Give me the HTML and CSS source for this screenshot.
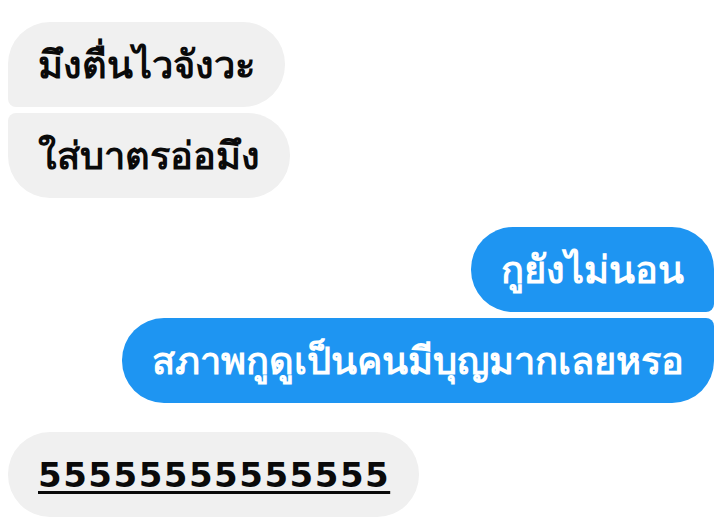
FILE: index.html
```html
<!DOCTYPE html>
<html lang="th">
<head>
<meta charset="utf-8">
<link rel="stylesheet" href="styles.css">
</head>
<body>
<div class="chat">
  <div class="group in">
    <div class="bubble first"><span class="t">มึงตื่นไวจังวะ</span></div>
    <div class="bubble last"><span class="t">ใส่บาตรอ่อมึง</span></div>
  </div>
  <div class="group out">
    <div class="bubble first"><span class="t">กูยังไม่นอน</span></div>
    <div class="bubble last"><span class="t">สภาพกูดูเป็นคนมีบุญมากเลยหรอ</span></div>
  </div>
  <div class="group in">
    <div class="bubble single numb"><span class="t num">55555555555555</span></div>
  </div>
</div>
</body>
</html>
```
FILE: styles.css
```css
html, body {
  margin: 0;
  padding: 0;
  background: #ffffff;
}
.chat {
  width: 720px;
  height: 530px;
  padding: 22px 6px 0 8px;
  box-sizing: border-box;
  display: flex;
  flex-direction: column;
  gap: 29px;
  font-family: "Liberation Sans", "Noto Sans", sans-serif;
  font-weight: bold;
}
.group {
  display: flex;
  flex-direction: column;
  gap: 6px;
}
.group.in { align-items: flex-start; }
.group.out { align-items: flex-end; }
.bubble {
  height: 85px;
  display: flex;
  align-items: center;
  padding: 0 30px;
  box-sizing: border-box;
  border-radius: 42px;
  font-size: 38px;
  white-space: nowrap;
}
.in .bubble { background: #f0f0f0; color: #0a0a0a; }
.out .bubble { background: #1e95f2; color: #ffffff; }
.in .first { border-bottom-left-radius: 8px; }
.in .last { border-top-left-radius: 8px; }
.out .first { border-bottom-right-radius: 8px; }
.out .last { border-top-right-radius: 8px; }
.numb {
  padding: 0 29px 0 30px;
}
.num {
  font-family: "DejaVu Sans", sans-serif;
  font-size: 34px;
  letter-spacing: 1.5px;
  text-decoration: underline;
  text-decoration-thickness: 3px;
  text-underline-offset: 4px;
}
```
